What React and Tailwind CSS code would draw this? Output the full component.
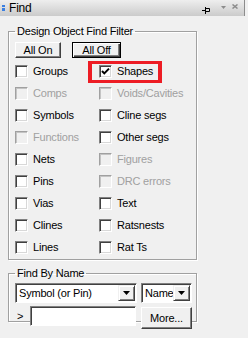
import clsx from 'clsx'

const left = [
  { label: 'Groups' },
  { label: 'Comps', disabled: true },
  { label: 'Symbols' },
  { label: 'Functions', disabled: true },
  { label: 'Nets' },
  { label: 'Pins' },
  { label: 'Vias' },
  { label: 'Clines' },
  { label: 'Lines' },
]

const right = [
  { label: 'Shapes', checked: true, marked: true },
  { label: 'Voids/Cavities', disabled: true },
  { label: 'Cline segs' },
  { label: 'Other segs' },
  { label: 'Figures', disabled: true },
  { label: 'DRC errors', disabled: true },
  { label: 'Text' },
  { label: 'Ratsnests' },
  { label: 'Rat Ts' },
]

function CheckBox({ checked, disabled }) {
  return (
    <span
      className={clsx(
        'flex h-[13px] w-[13px] shrink-0 items-center justify-center border',
        disabled
          ? 'border-t-[#a0a0a0] border-l-[#a0a0a0] border-b-white border-r-white bg-[#f0f0f0] shadow-[inset_1px_1px_0_#c4c4c4]'
          : 'border-t-[#808080] border-l-[#808080] border-b-white border-r-white bg-white shadow-[inset_1px_1px_0_#404040,inset_-1px_-1px_0_#d8d8d8]'
      )}
    >
      {checked && (
        <svg width="9" height="9" viewBox="0 0 9 9">
          <path d="M1 4 L3.3 6.4 L8 1.6" fill="none" stroke="#000" strokeWidth="2" />
        </svg>
      )}
    </span>
  )
}

function Option({ label, checked, disabled, marked }) {
  return (
    <div className="relative flex h-[22px] items-center gap-[5px]">
      <CheckBox checked={checked} disabled={disabled} />
      <span className={disabled ? 'text-[#a0a0a0]' : 'text-black'}>{label}</span>
      {marked && (
        <span className="pointer-events-none absolute left-[-11px] top-[1px] h-[22px] w-[74px] border-x-4 border-y-[3px] border-[#ed1c24]" />
      )}
    </div>
  )
}

function Arrow() {
  return (
    <span className="flex h-full w-[17px] items-center justify-center border border-t-[#f0f0f0] border-l-[#f0f0f0] border-b-[#404040] border-r-[#404040] bg-[#f0f0f0] shadow-[inset_1px_1px_0_#fff,inset_-1px_-1px_0_#808080]">
      <svg width="7" height="4" viewBox="0 0 7 4">
        <path d="M0 0 H7 L3.5 4 Z" fill="#000" />
      </svg>
    </span>
  )
}

function Combo({ text, width }) {
  return (
    <div
      className={clsx(
        'flex h-[20px] items-stretch border border-t-[#808080] border-l-[#808080] border-b-white border-r-white bg-white p-px shadow-[inset_1px_1px_0_#404040]',
        width
      )}
    >
      <span className="flex-1 overflow-hidden whitespace-nowrap pl-[2px] leading-[16px]">{text}</span>
      <Arrow />
    </div>
  )
}

export default function App() {
  return (
    <div className="h-[338px] w-[248px] overflow-hidden bg-[#f0f0f0] font-['Liberation_Sans',Arial,sans-serif] text-[11px] tracking-[-0.2px] text-black">
      {/* Title bar */}
      <div className="flex h-[16px] w-[245px] items-center border-r border-[#8c8c8c] bg-gradient-to-b from-[#eeeeee] to-[#cbcbcb]">
        <div className="ml-[2px] flex w-[3px] flex-col gap-[1px]">
          <span className="h-[2px] w-[3px] bg-[#3b7fe0]" />
          <span className="h-[3px] w-[3px] bg-[#3b7fe0]" />
        </div>
        <span className="ml-[4px] text-[12px] leading-[16px]">Find</span>
        <div className="flex-1" />
        <svg width="8" height="7" viewBox="0 0 8 7" className="mt-[4px]">
          <path d="M0 3.5 H3 M3.5 0 V7 M3.5 1.5 H7.5 V4.5 H3.5" fill="none" stroke="#000" strokeWidth="1" />
        </svg>
        <svg width="5" height="3" viewBox="0 0 5 3" className="ml-[11px] mt-[-2px]">
          <path d="M0 0 H5 L2.5 3 Z" fill="#8c8c8c" />
        </svg>
        <svg width="6" height="5" viewBox="0 0 6 5" className="ml-[6px] mr-[6px] mt-[-3px]">
          <path d="M0.5 0.5 L5.5 4.5 M5.5 0.5 L0.5 4.5" fill="none" stroke="#8c8c8c" strokeWidth="1.5" />
        </svg>
      </div>

      <div className="pl-[8px]">
        {/* Design Object Find Filter */}
        <fieldset className="mt-[9px] w-[189px] border border-[#a0a0a0] pb-[1px] pl-[6px] shadow-[1px_1px_0_#fff,inset_1px_1px_0_#fff]">
          <legend className="px-[2px] leading-[13px]">Design Object Find Filter</legend>
          <div className="mt-[4px] flex gap-[11px]">
            <button className="h-[16px] w-[46px] border border-t-white border-l-white border-b-[#404040] border-r-[#404040] leading-[13px] shadow-[inset_-1px_-1px_0_#808080]">
              All On
            </button>
            <button className="h-[16px] w-[49px] border border-black leading-[13px] shadow-[inset_1px_1px_0_#fff,inset_-1px_-1px_0_#404040,inset_-2px_-2px_0_#808080]">
              All Off
            </button>
          </div>
          <div className="mt-[2px] grid grid-cols-[84px_1fr]">
            {left.map((l, i) => (
              <div key={l.label} className="contents">
                <Option {...l} />
                <Option {...right[i]} />
              </div>
            ))}
          </div>
        </fieldset>

        {/* Find By Name */}
        <fieldset className="mt-[7px] h-[55px] w-[189px] border border-[#a0a0a0] pl-[6px] shadow-[1px_1px_0_#fff,inset_1px_1px_0_#fff]">
          <legend className="px-[2px] leading-[13px]">Find By Name</legend>
          <div className="mt-[3px] flex gap-[4px]">
            <Combo text="Symbol (or Pin)" width="w-[122px]" />
            <Combo text="Name" width="w-[51px]" />
          </div>
          <div className="mt-[3px] flex items-start">
            <span className="w-[15px] pl-[2px] leading-[20px]">&gt;</span>
            <input
              type="text"
              className="h-[20px] w-[106px] border border-t-[#808080] border-l-[#808080] border-b-white border-r-white bg-white shadow-[inset_1px_1px_0_#404040] outline-none"
            />
            <button className="ml-[5px] mt-[1px] h-[22px] w-[51px] border border-t-white border-l-white border-b-[#404040] border-r-[#404040] bg-[#f0f0f0] shadow-[inset_-1px_-1px_0_#808080]">
              More...
            </button>
          </div>
        </fieldset>
      </div>
    </div>
  )
}
